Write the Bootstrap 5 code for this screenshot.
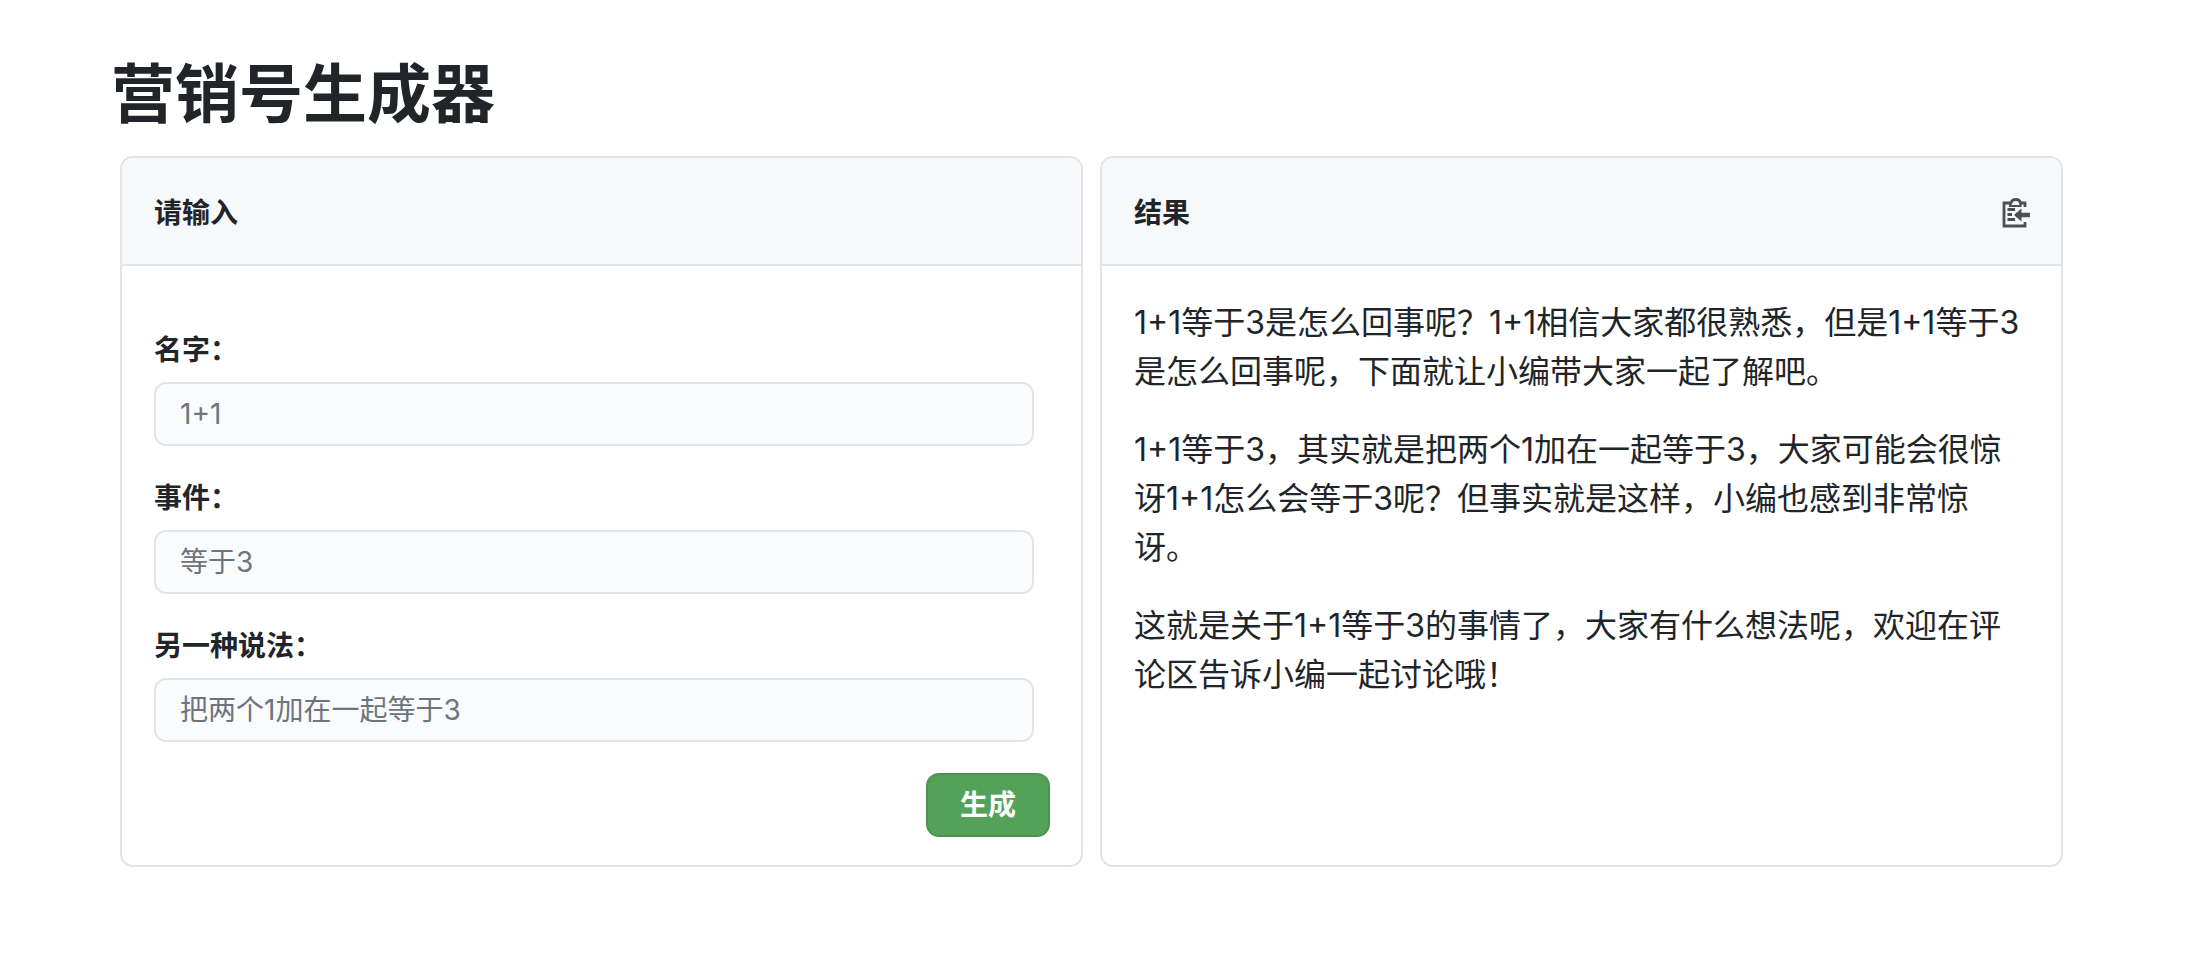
<!DOCTYPE html>
<html lang="zh-CN">
<head>
<meta charset="utf-8">
<title>营销号生成器</title>
<link rel="stylesheet" href="https://cdn.jsdelivr.net/npm/bootstrap@5.3.0/dist/css/bootstrap.min.css">
<style>
html{font-size:25.6px}
body{font-family:Inter,"Noto Sans CJK SC",sans-serif;color:#212529}
.page-title{font-size:64px;font-weight:700;line-height:76.8px;margin:56px 0 23.5px 111px}
.panels{padding:0 145px 0 120px}
.panels .row{--bs-gutter-x:17px;--bs-gutter-y:0}
.panel-card{height:711px;border:2.5px solid #e2e3e7;border-radius:13px}
.panel-head{height:108px;padding:3px 32px 0;background:#f7f8fa;border-bottom:2px solid #e3e4e8;font-size:28px;font-weight:700;display:flex;align-items:center;justify-content:space-between}
.panel-head:first-child{border-radius:10px 10px 0 0}
.panel-form{padding:64.5px 32px 0}
.form-label{font-weight:700;font-size:28px;line-height:38px;margin-bottom:13px}
.field{margin-bottom:33px}
.field-last{margin-bottom:31px}
.form-control{height:64px;width:880px;padding:0 24px;font-size:28px;background:#fafbfd;border:2.5px solid #e3e4e8;border-radius:12px}
.form-control::placeholder{color:#6c757d;opacity:1}
.go-btn{width:124px;height:64px;padding:0;font-size:28px;font-weight:700;background:#54a259;border:2px solid #4c9351;border-radius:13px;color:#fff}
.go-row{margin-right:-1px}
.result-body{padding:33px 32px 0;font-size:32px;line-height:48.6px}
.result-body p{margin-bottom:30px}
.clip-icon{margin-right:-1px}
</style>
</head>
<body>
<h1 class="page-title">营销号生成器</h1>
<div class="panels">
<div class="row">
<div class="col-6">
<div class="card panel-card">
<div class="panel-head">请输入</div>
<form class="panel-form">
<div class="field"><label class="form-label d-block" for="a">名字：</label><input id="a" class="form-control" placeholder="1+1"></div>
<div class="field"><label class="form-label d-block" for="b">事件：</label><input id="b" class="form-control" placeholder="等于3"></div>
<div class="field-last"><label class="form-label d-block" for="c">另一种说法：</label><input id="c" class="form-control" placeholder="把两个1加在一起等于3"></div>
<div class="d-flex justify-content-end go-row"><button type="button" class="btn go-btn">生成</button></div>
</form>
</div>
</div>
<div class="col-6">
<div class="card panel-card">
<div class="panel-head">结果
<svg class="clip-icon" width="28" height="30" viewBox="0 0 28 30" fill="none" stroke="#495057" stroke-width="2.8"><path d="M23 9V5H18.500C18 2.600 16.500 1.500 14 1.500S9.500 2.600 9 5H2V28H23V24"/><path d="M8 5V8H18.500V5" stroke-width="2.200"/><path d="M5.500 11.500H13M5.500 16.500H10M5.500 21.500H13"/><path d="M14 17H28" stroke-width="4.500"/><path d="M19.500 10.500V23.500L12 17Z" fill="#495057" stroke="none"/></svg>
</div>
<div class="result-body">
<p>1+1等于3是怎么回事呢？1+1相信大家都很熟悉，但是1+1等于3是怎么回事呢，下面就让小编带大家一起了解吧。</p>
<p>1+1等于3，其实就是把两个1加在一起等于3，大家可能会很惊讶1+1怎么会等于3呢？但事实就是这样，小编也感到非常惊讶。</p>
<p>这就是关于1+1等于3的事情了，大家有什么想法呢，欢迎在评论区告诉小编一起讨论哦！</p>
</div>
</div>
</div>
</div>
</div>
</body>
</html>
